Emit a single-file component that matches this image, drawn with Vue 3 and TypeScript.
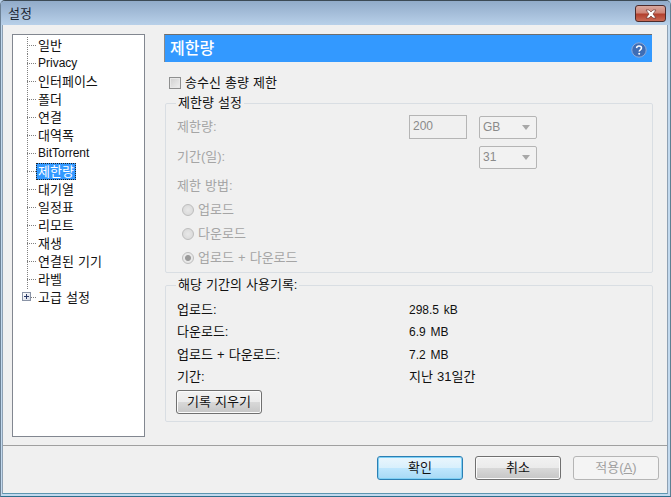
<script setup lang="ts">
interface TreeItem { label: string; selected?: boolean; expandable?: boolean; latin?: boolean }
const items: TreeItem[] = [
  { label: '일반' }, { label: 'Privacy', latin: true }, { label: '인터페이스' }, { label: '폴더' },
  { label: '연결' }, { label: '대역폭' }, { label: 'BitTorrent', latin: true },
  { label: '제한량', selected: true }, { label: '대기열' }, { label: '일정표' },
  { label: '리모트' }, { label: '재생' }, { label: '연결된 기기' }, { label: '라벨' },
  { label: '고급 설정', expandable: true },
]
const usage = [
  { k: '업로드:', v: '298.5 kB', latin: true },
  { k: '다운로드:', v: '6.9 MB', latin: true },
  { k: '업로드 + 다운로드:', v: '7.2 MB', latin: true },
  { k: '기간:', v: '지난 31일간', latin: false },
]
const radios = [
  { label: '업로드', on: false },
  { label: '다운로드', on: false },
  { label: '업로드 + 다운로드', on: true },
]
</script>

<template>
  <div class="window">
    <div class="titlebar">
      <span class="title">설정</span>
      <button class="close" aria-label="닫기">
        <svg width="14" height="10" viewBox="0 0 14 10"><path d="M2 1h3l2 2 2-2h3L9 5l3 4H9L7 7 5 9H2l3-4z" fill="#fff" stroke="#5a2a25" stroke-width=".6"/></svg>
      </button>
    </div>
    <div class="client">
      <div class="main">
        <nav class="tree">
          <div v-for="it in items" :key="it.label" class="row" :class="{ last: it.expandable }">
            <span v-if="it.expandable" class="plus"></span>
            <span class="twig"></span>
            <span class="label" :class="{ sel: it.selected, latin: it.latin }">{{ it.label }}</span>
          </div>
        </nav>
        <section class="panel">
          <header class="head">
            <span class="head-title">제한량</span>
            <svg class="help" width="16" height="16" viewBox="0 0 16 16">
              <circle cx="8" cy="8" r="7.2" fill="#3e6db5" stroke="#8fa9d6"/>
              <path d="M5.6 6.1C5.7 4.6 6.7 4 8 4c1.400 0 2.500.8 2.500 2 0 1.900-2.300 1.800-2.300 3.600" fill="none" stroke="#fff" stroke-width="1.500"/>
              <circle cx="8.200" cy="11.800" r="1" fill="#fff"/>
            </svg>
          </header>
          <label class="check-line"><span class="check"></span>송수신 총량 제한</label>
          <fieldset class="group g1">
            <legend>제한량 설정</legend>
            <div class="limit-row">
              <span class="dim">제한량:</span>
              <span class="input">200</span>
              <span class="select">GB<i></i></span>
            </div>
            <div class="limit-row">
              <span class="dim">기간(일):</span>
              <span></span>
              <span class="select">31<i></i></span>
            </div>
            <div class="dim method">제한 방법:</div>
            <div v-for="r in radios" :key="r.label" class="radio-row dim">
              <span class="radio" :class="{ on: r.on }"></span>{{ r.label }}
            </div>
          </fieldset>
          <fieldset class="group g2">
            <legend>해당 기간의 사용기록:</legend>
            <div v-for="u in usage" :key="u.k" class="usage-row">
              <span>{{ u.k }}</span><span :class="{ val: u.latin }">{{ u.v }}</span>
            </div>
            <button class="btn clear">기록 지우기</button>
          </fieldset>
        </section>
      </div>
      <footer class="footer">
        <button class="btn primary">확인</button>
        <button class="btn">취소</button>
        <button class="btn disabled">적용(<u>A</u>)</button>
      </footer>
    </div>
  </div>
</template>

<style>
html, body { margin: 0; background: #b9d1ea; }
</style>

<style scoped>
.window {
  width: 671px; height: 497px; box-sizing: border-box;
  display: flex; flex-direction: column;
  border: 1px solid #3c4a55; border-left-color: #6d8296; border-right-color: #5d7f92; border-bottom-color: #2c6f8c;
  border-radius: 5px 5px 0 0;
  background: #c2d9ee;
  padding: 0 3px 2px 1px;
  font: 13px/16px "Liberation Sans", "Noto Sans CJK KR", sans-serif;
  word-spacing: 0.500px;
  color: #111;
  overflow: hidden;
}
.titlebar {
  height: 24px; flex: none;
  margin: 0 -3px 0 -1px; padding: 0 4px 0 7px;
  display: flex; align-items: center; justify-content: space-between;
  background: linear-gradient(#91abc9, #b8d0e9);
}
.title { font-size: 13px; color: #1c2733; margin-top: 2px; }
.close {
  width: 31px; height: 17px; padding: 0; margin-top: 1px;
  display: flex; align-items: center; justify-content: center;
  border: 1px solid #4d2b2b; border-radius: 3px;
  background: linear-gradient(#d9a99f 0, #cf8577 45%, #b2402e 55%, #c96a55 100%);
}
.client {
  flex: 1; display: flex; flex-direction: column; min-height: 0;
  background: #f0f0f0; border-left: 1px solid #8fa1b3; border-right: 1px solid #8fa1b3;
  border-bottom: 1px solid #5d96b0;
  margin-right: -1px;
}
.main {
  flex: none; height: 421px; box-sizing: border-box;
  display: flex; gap: 19px;
  padding: 9px 15px 0 9px;
  border-bottom: 1px solid #a0a0a0;
}
.tree {
  width: 133px; height: 403px; box-sizing: border-box; flex: none;
  background: #fff; border: 1px solid #828790;
  padding-top: 1px;
}
.row {
  height: 18px; padding-left: 14px; position: relative;
  display: flex; align-items: center;
  background: linear-gradient(#808080 50%, transparent 50%) 14px 0 / 1px 2px repeat-y;
}
.row:first-child { background-position: 14px 9px; }
.row.last { background-size: 1px 2px; background-repeat: no-repeat; }
.twig {
  width: 9px; height: 1px; flex: none;
  background: linear-gradient(90deg, #808080 50%, transparent 50%) 0 0 / 2px 1px;
}
.label { padding: 0 2px; line-height: 17px; color: #111; white-space: nowrap; margin-top: 1px; }
.label.latin { margin-top: 0; font-size: 12px; }
.label.sel { background: #3399ff; color: #fff; outline: 1px dotted #222; outline-offset: -1px; }
.plus {
  position: absolute; left: 9px; top: 4px; width: 9px; height: 9px; box-sizing: border-box;
  border: 1px solid #8a94a6; background:
    linear-gradient(#2b3a66, #2b3a66) center / 5px 1px no-repeat,
    linear-gradient(#2b3a66, #2b3a66) center / 1px 5px no-repeat,
    linear-gradient(135deg, #fff, #d4d9e4);
}
.panel { flex: 1; min-width: 0; display: flex; flex-direction: column; }
.head {
  height: 28px; box-sizing: border-box; flex: none;
  width: 488px;
  display: flex; align-items: center; justify-content: space-between;
  background: #3399ff; border-top: 1px solid #6e6e6e; border-left: 1px solid #8a8a8a;
  padding: 0 5px 0 5px;
}
.head-title { font-size: 16px; font-weight: 500; color: #fff; }
.help { flex: none; margin-top: 2px; }
.check-line {
  height: 16px; margin: 13px 0 0 5px; display: flex; align-items: center; gap: 4px;
}
.check {
  width: 12px; height: 12px; flex: none; box-sizing: border-box; border: 1px solid #8e8f8f;
  background: linear-gradient(135deg, #cfcfcf, #f0f0f0);
  box-shadow: inset 0 0 0 1px #e8e8e8;
}
.group {
  margin: 0 0 0 1px; min-width: 0; width: 488px; box-sizing: border-box;
  border: 1px solid #d9dee3; border-radius: 2px;
  padding: 0 0 0 11px;
}
.group legend {
  padding: 0 2px; line-height: 14px; height: 14px;
  margin-left: -1px;
}
.g1 { height: 177px; margin-top: 5px; }
.g2 { height: 144px; margin-top: 5px; }
.dim { color: #a5a5a5; }
.limit-row {
  display: grid; grid-template-columns: 232px 70px 58px;
  align-items: center; height: 24px; margin-bottom: 6px;
}
.limit-row:first-of-type { margin-top: 5px; }
.input {
  width: 58px; height: 24px; box-sizing: border-box; border: 1px solid #b5b5b5; padding: 2px 3px;
  color: #8a8a8a; background: #f0f0f0; font-size: 12px;
}
.select {
  height: 23px; box-sizing: border-box; border: 1px solid #b5b5b5; border-radius: 2px;
  padding: 3px 3px; color: #8a8a8a; background: #f2f2f2; font-size: 12px;
  display: flex; justify-content: space-between; align-items: center;
}
.select i {
  width: 0; height: 0; margin-right: 3px;
  border-left: 4px solid transparent; border-right: 4px solid transparent; border-top: 5px solid #a8a8a8;
}
.method { height: 18px; line-height: 18px; margin-top: 8px; margin-bottom: 6px; }
.radio-row { height: 18px; display: flex; align-items: center; gap: 4px; margin: 0 0 6px 5px; }
.radio {
  width: 12px; height: 12px; box-sizing: border-box; border-radius: 50%; flex: none; border: 1px solid #bdbdbd;
  background: radial-gradient(circle, #e8e8e8, #d6d6d6);
}
.radio.on { background: radial-gradient(circle, #9a9a9a 0 2.500px, #e8e8e8 3.500px); }
.usage-row {
  display: grid; grid-template-columns: 232px 1fr; height: 22px; align-items: center; color: #111;
}
.usage-row:first-of-type { margin-top: 7px; }
.usage-row:nth-of-type(3) { margin-top: 1px; }
.val { font-size: 12px; word-spacing: 1.500px; }
.btn {
  font: inherit; word-spacing: inherit; color: #111; padding: 0;
  width: 86px; height: 24px; box-sizing: border-box;
  border: 1px solid #707070; border-radius: 3px;
  background: linear-gradient(#f2f2f2 0, #ebebeb 48%, #d8d8d8 52%, #c6c6c6 100%);
  box-shadow: inset 0 0 0 1px #fbfbfb;
}
.clear { display: block; margin: 2px 0 0 -1px; }
.footer {
  flex: 1; display: flex; justify-content: flex-end; gap: 12px;
  padding: 10px 8px 0 0; align-items: flex-start;
}
.primary {
  border-color: #2c7fb3;
  background: linear-gradient(#eaf6fd 0, #d9f0fc 48%, #bee6fd 52%, #a7d9f5 100%);
  box-shadow: inset 0 0 0 1px #7fd0f5;
}
.disabled { border-color: #b5b5b5; background: #f4f4f4; color: #a0a0a0; box-shadow: none; }
</style>
